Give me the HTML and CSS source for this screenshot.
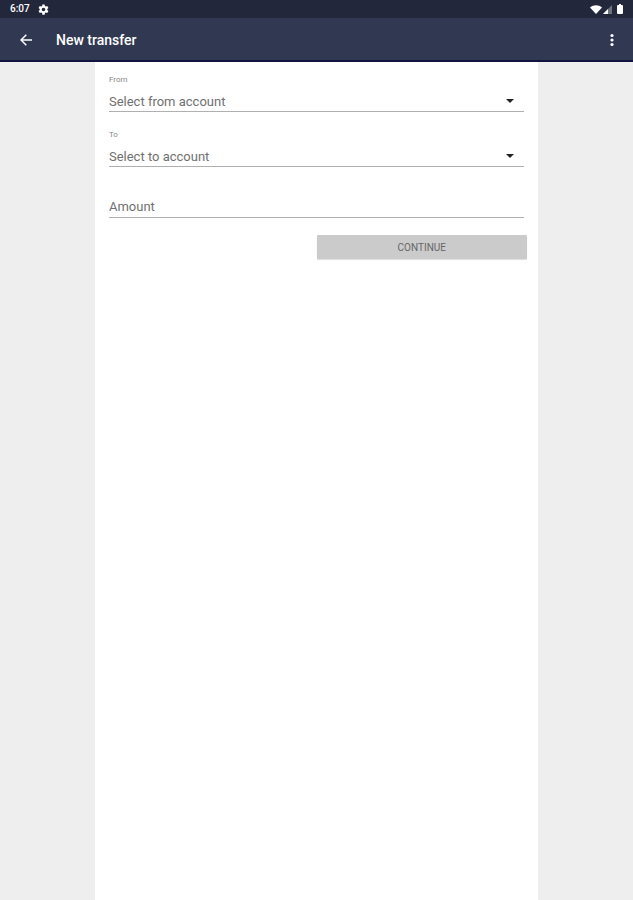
FILE: index.html
```html
<!DOCTYPE html>
<html lang="en">
<head>
  <meta charset="UTF-8">
  <meta name="viewport" content="width=device-width, initial-scale=1.0">
  <title>New transfer</title>
  <link rel="stylesheet" href="styles.css">
</head>
<body>
  <div class="status-bar">
    <span class="clock">6:07</span>
    <svg class="gear" viewBox="0 0 24 24" width="11" height="11">
      <path fill="#fff" fill-rule="evenodd" d="M9.500 1h5l.6 3.200 2 1.200 3.100-1.200 2.500 4.300-2.500 2.200v2.600l2.500 2.200-2.500 4.300-3.100-1.200-2 1.200-.6 3.400h-5l-.6-3.400-2-1.200-3.100 1.200-2.500-4.300 2.500-2.200v-2.600L1.300 8.500l2.500-4.300 3.100 1.200 2-1.200zM12 8a4 4 0 1 0 0 8 4 4 0 0 0 0-8z"/>
    </svg>
    <div class="indicators">
      <svg viewBox="0 0 12 9" width="12" height="9">
        <path fill="#fff" d="M0 2.500C3.500-.6 8.500-.6 12 2.500L6 9z"/>
      </svg>
      <svg viewBox="0 0 9 9" width="9" height="9">
        <path fill="#fff" fill-opacity=".35" d="M9 0v9H0z"/>
        <path fill="#fff" d="M5 4v5H0z"/>
      </svg>
      <svg class="battery" viewBox="0 0 6 10" width="6" height="10">
        <path fill="#fff" d="M2 0h2v1h1q1 0 1 1v7q0 1-1 1H1q-1 0-1-1V2q0-1 1-1h1z"/>
      </svg>
    </div>
  </div>

  <header class="app-bar">
    <button class="icon-btn" type="button" aria-label="Back">
      <svg viewBox="0 0 12 12" width="12" height="12">
        <path fill="none" stroke="#fff" stroke-width="1.500" d="M12 6H1.200M6.300.7L1 6l5.300 5.300"/>
      </svg>
    </button>
    <h1>New transfer</h1>
    <button class="icon-btn" type="button" aria-label="More options">
      <svg viewBox="0 0 4 14" width="4" height="14">
        <g fill="#fff">
          <circle cx="2" cy="2.500" r="1.600"/>
          <circle cx="2" cy="7" r="1.600"/>
          <circle cx="2" cy="11.500" r="1.600"/>
        </g>
      </svg>
    </button>
  </header>

  <main>
    <form class="transfer">
      <div class="field">
        <label for="from">From</label>
        <div class="select">
          <select id="from">
            <option>Select from account</option>
          </select>
        </div>
      </div>
      <div class="field">
        <label for="to">To</label>
        <div class="select">
          <select id="to">
            <option>Select to account</option>
          </select>
        </div>
      </div>
      <div class="field amount">
        <input type="text" id="amount" inputmode="decimal" placeholder="Amount" aria-label="Amount">
      </div>
      <button class="continue" type="button">CONTINUE</button>
    </form>
  </main>
</body>
</html>
```
FILE: styles.css
```css
* {
  box-sizing: border-box;
}
body {
  margin: 0;
  min-height: 100vh;
  display: flex;
  flex-direction: column;
  background-color: #eee;
  font-family: Roboto, "Liberation Sans", sans-serif;
}
svg {
  display: block;
}

/* status bar */
.status-bar {
  display: flex;
  align-items: center;
  height: 18px;
  padding: 0 10px;
  background-color: #22273b;
  color: #fff;
}
.clock {
  font-size: 10px;
  font-weight: 500;
  line-height: 18px;
}
.gear {
  margin-left: 8px;
}
.indicators {
  display: flex;
  align-items: center;
  gap: 1px;
  margin-left: auto;
}
.battery {
  margin-left: 4px;
}

/* app bar */
.app-bar {
  display: flex;
  align-items: center;
  height: 44px;
  padding: 2px 9px 0 8px;
  background-color: #303852;
  border-bottom: 2px solid #101440;
  color: #fff;
}
.app-bar h1 {
  flex: 1;
  margin: 0 0 0 12px;
  font-size: 14px;
  font-weight: 500;
  line-height: 20px;
}
.icon-btn {
  display: flex;
  align-items: center;
  justify-content: center;
  padding: 0;
  width: 36px;
  height: 36px;
  background: none;
  border: none;
  cursor: pointer;
}
.icon-btn:last-child {
  width: 24px;
}

/* form */
main {
  flex: 1;
  width: 70%;
  margin: 0 auto;
  background-color: #fff;
}
.transfer {
  display: flex;
  flex-direction: column;
  padding: 12px 14px;
}
.field {
  margin-bottom: 17px;
}
.field label {
  display: block;
  font-size: 8px;
  line-height: 12px;
  color: #888;
}
.select {
  position: relative;
}
.select::after {
  content: "";
  position: absolute;
  top: 13px;
  right: 10px;
  border: 4px solid transparent;
  border-top-color: #222;
  border-bottom: none;
  pointer-events: none;
}
.field select,
.field input {
  display: block;
  appearance: none;
  width: 100%;
  height: 26px;
  padding: 4px 0 0;
  background: none;
  border: none;
  border-bottom: 1px solid #b0b0b0;
  border-radius: 0;
  outline: none;
  font-family: inherit;
  font-size: 13px;
  color: #707070;
}
.field select {
  padding-top: 6px;
}
.field input::placeholder {
  color: #707070;
}
.field select:focus,
.field input:focus {
  border-bottom-color: #303852;
}
.amount {
  margin-top: 8px;
}
.continue {
  align-self: flex-end;
  width: calc(50% + 3px);
  height: 24px;
  margin-right: -3px;
  padding: 0;
  background-color: #cbcbcb;
  border: none;
  border-radius: 1px;
  box-shadow: 0 1px 1px #ddd;
  font-family: inherit;
  font-size: 10px;
  color: #666;
}
```
